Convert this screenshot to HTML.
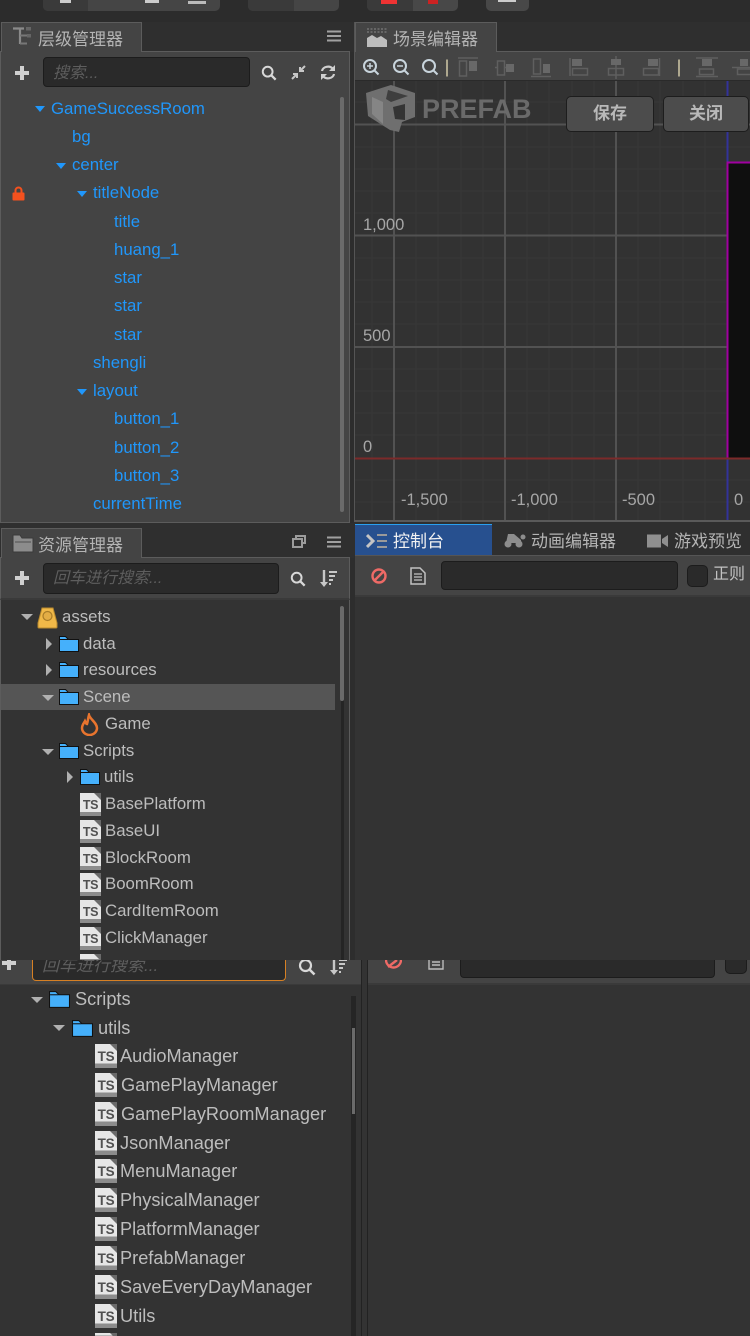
<!DOCTYPE html>
<html lang="zh">
<head>
<meta charset="utf-8">
<title>Cocos Creator</title>
<style>
html,body{margin:0;padding:0;background:#2d2d2d;width:750px;height:1336px;overflow:hidden}
body{position:relative;font-family:"Liberation Sans","Noto Sans CJK SC",sans-serif}
div,span,svg{position:absolute}
#r{left:0;top:0;width:750px;height:1336px;overflow:hidden;filter:blur(.35px)}
.t{white-space:nowrap;line-height:20px;height:20px}
.h{font-size:16.8px;color:#2097fb;margin-top:1px}
.a{font-size:16.8px;color:#bdbdbd;margin-top:1px}
.b{font-size:18.2px;color:#bdbdbd;margin-top:1px}
.tab{font-size:17px;color:#b4b4b4;font-weight:400;white-space:nowrap;line-height:24px}
.ph{font-style:italic;color:#5e5e5e;white-space:nowrap;font-size:16px;line-height:24px}
.ar{width:0;height:0;border-left:5.5px solid transparent;border-right:5.5px solid transparent;border-top:6px solid #2097fb}
.ag{width:0;height:0;border-left:6px solid transparent;border-right:6px solid transparent;border-top:6px solid #b0b0b0}
.ad{width:0;height:0;border-top:6px solid transparent;border-bottom:6px solid transparent;border-left:6px solid #b0b0b0}
.ts,.ts2{width:21px;height:23px;background:linear-gradient(#e6e6e6 0,#e6e6e6 82%,#8c8c8c 82%,#8c8c8c 100%);font:700 12.5px/25px "Liberation Sans",sans-serif;color:#505050;text-align:center;letter-spacing:-.3px;overflow:hidden}
.ts2{width:22px;height:24px;font-size:13.5px;line-height:26px}
.ts::after,.ts2::after{content:"";position:absolute;right:0;top:0;width:0;height:0;border-top:7px solid #6a6a6a;border-left:7px solid transparent}
.inp{background:#2a2a2a;border:1px solid #1c1c1c;border-radius:4px;box-sizing:border-box}
.btn{background:#4c4c4c;border:1px solid #1d1d1d;border-radius:5px;box-sizing:border-box;color:#b9b9b9;font-size:17px;font-weight:700;text-align:center;line-height:33px}
.lab{font-size:16.5px;color:#a6a6a6;white-space:nowrap;line-height:20px}
</style>
</head>
<body>
<svg width="0" height="0" style="position:absolute">
<defs>
<symbol id="folder" viewBox="0 0 20 16">
<path d="M.5 15.500V.5h6l3 3h10v12z" fill="#45b0fb" stroke="#111" stroke-width="1"/>
<path d="M1 3.500h8" stroke="#111" stroke-width="1"/>
</symbol>
<symbol id="mag" viewBox="0 0 18 18">
<circle cx="7.500" cy="7.500" r="5.500" fill="none" stroke="#d8d8d8" stroke-width="2.200"/>
<path d="M11.500 11.500l5 5" stroke="#d8d8d8" stroke-width="2.600"/>
</symbol>
<symbol id="plus" viewBox="0 0 14 14">
<path d="M7 0v14M0 7h14" stroke="#d0d0d0" stroke-width="4"/>
</symbol>
<symbol id="menu" viewBox="0 0 14 12">
<path d="M0 1.500h14M0 6h14M0 10.500h14" stroke="#a0a0a0" stroke-width="2"/>
</symbol>
</defs>
</svg>
<div id="r">

<!-- top strip -->
<div style="left:0;top:0;width:750px;height:22px;background:#2c2c2c"></div>
<div style="left:43px;top:0;width:177px;height:11px;background:#454545;border-radius:0 0 5px 5px"></div>
<div style="left:43px;top:0;width:45px;height:11px;background:#3a3a3a;border-radius:0 0 0 5px"></div>
<div style="left:248px;top:0;width:91px;height:11px;background:#454545;border-radius:0 0 5px 5px"></div>
<div style="left:248px;top:0;width:46px;height:11px;background:#3a3a3a;border-radius:0 0 0 5px"></div>
<div style="left:367px;top:0;width:91px;height:11px;background:#484848;border-radius:0 0 5px 5px"></div>
<div style="left:367px;top:0;width:46px;height:11px;background:#3a3a3a;border-radius:0 0 0 5px"></div>
<div style="left:486px;top:0;width:43px;height:11px;background:#484848;border-radius:0 0 5px 5px"></div>
<div style="left:381px;top:0;width:16px;height:4px;background:#e33"></div>
<div style="left:428px;top:0;width:10px;height:4px;background:#c22"></div>
<div style="left:60px;top:0;width:11px;height:3px;background:#ccc"></div>
<div style="left:145px;top:0;width:14px;height:3px;background:#ccc"></div>
<div style="left:188px;top:1px;width:18px;height:3px;background:#bbb"></div>
<div style="left:498px;top:0;width:18px;height:2px;background:#ccc"></div>

<!-- hierarchy panel -->
<div style="left:0;top:22px;width:354px;height:30px;background:#2f2f2f"></div>
<div style="left:0;top:51px;width:350px;height:472px;background:#444;box-sizing:border-box;border:1px solid #5c5c5c"></div>
<div style="left:1px;top:22px;width:141px;height:30px;background:#444;border:1px solid #5c5c5c;border-bottom:0;box-sizing:border-box"></div>
<svg style="left:12px;top:26px" width="20" height="22" viewBox="0 0 20 22"><path d="M1 2.500h11M8 3v15" stroke="#8a8a8a" stroke-width="2.200" fill="none"/><path d="M8 9.500h8M8 17.500h8" stroke="#777" stroke-width="2" fill="none"/><rect x="14" y="1" width="5" height="3.500" fill="#666"/><rect x="15" y="8" width="4" height="3.500" fill="#666"/><rect x="15" y="16" width="4" height="3.500" fill="#444"/></svg>
<div class="tab" style="left:38px;top:28px">层级管理器</div>
<svg style="left:327px;top:30px" width="14" height="12"><use href="#menu"/></svg>
<svg style="left:15px;top:66px" width="14" height="14"><use href="#plus"/></svg>
<div class="inp" style="left:43px;top:57px;width:207px;height:30px"></div>
<div class="ph" style="left:53px;top:62px">搜索...</div>
<svg style="left:261px;top:65px" width="16" height="16"><use href="#mag"/></svg>
<svg style="left:291px;top:65px" width="15" height="15" viewBox="0 0 15 15"><path d="M14 1L9 6M9 2v4h4M1 14l5-5M2 9h4v4" stroke="#c8c8c8" stroke-width="2" fill="none"/></svg>
<svg style="left:320px;top:65px" width="16" height="15" viewBox="0 0 16 15"><path d="M2 6a6 5 0 0 1 11-2M14 9a6 5 0 0 1-11 2" stroke="#cfcfcf" stroke-width="2.200" fill="none"/><path d="M15 0v6h-6zM1 15V9h6z" fill="#cfcfcf"/></svg>
<div style="left:340px;top:97px;width:4px;height:415px;background:#6a6a6a;border-radius:2px"></div>

<div class="ar" style="left:35px;top:106px"></div><div class="t h" style="left:51px;top:98px">GameSuccessRoom</div>
<div class="t h" style="left:72px;top:126px">bg</div>
<div class="ar" style="left:56px;top:163px"></div><div class="t h" style="left:72px;top:154px">center</div>
<svg style="left:12px;top:186px" width="13" height="15" viewBox="0 0 13 15"><path d="M3.500 7V4.500a3 3 0 0 1 6 0V7" fill="none" stroke="#f4511e" stroke-width="2"/><rect x="0.500" y="6.500" width="12" height="8" rx="1" fill="#f4511e"/></svg>
<div class="ar" style="left:77px;top:191px"></div><div class="t h" style="left:93px;top:182px">titleNode</div>
<div class="t h" style="left:114px;top:211px">title</div>
<div class="t h" style="left:114px;top:239px">huang_1</div>
<div class="t h" style="left:114px;top:267px">star</div>
<div class="t h" style="left:114px;top:295px">star</div>
<div class="t h" style="left:114px;top:324px">star</div>
<div class="t h" style="left:93px;top:352px">shengli</div>
<div class="ar" style="left:77px;top:389px"></div><div class="t h" style="left:93px;top:380px">layout</div>
<div class="t h" style="left:114px;top:408px">button_1</div>
<div class="t h" style="left:114px;top:437px">button_2</div>
<div class="t h" style="left:114px;top:465px">button_3</div>
<div class="t h" style="left:93px;top:493px">currentTime</div>

<!-- assets panel -->
<div style="left:0;top:523px;width:354px;height:35px;background:#2f2f2f"></div>
<div style="left:0;top:557px;width:350px;height:43px;background:#444;box-sizing:border-box;border:1px solid #5c5c5c;border-bottom:2px solid #3a3a3a"></div>
<div style="left:1px;top:528px;width:141px;height:30px;background:#444;border:1px solid #5c5c5c;border-bottom:0;box-sizing:border-box"></div>
<svg style="left:12px;top:534px" width="22" height="20" viewBox="0 0 22 20"><path d="M1 18V1h7l2 3h11v14z" fill="#8c8c8c" stroke="#3a3a3a"/><path d="M3 8h16" stroke="#6e6e6e" stroke-width="2"/></svg>
<div class="tab" style="left:38px;top:534px">资源管理器</div>
<svg style="left:292px;top:535px" width="14" height="13" viewBox="0 0 14 13"><path d="M4 3V1h9v7h-3M1 4h9v8H1z" fill="none" stroke="#9c9c9c" stroke-width="2"/></svg>
<svg style="left:327px;top:536px" width="14" height="12"><use href="#menu"/></svg>
<svg style="left:15px;top:571px" width="14" height="14"><use href="#plus"/></svg>
<div class="inp" style="left:43px;top:563px;width:236px;height:31px"></div>
<div class="ph" style="left:53px;top:567px">回车进行搜索...</div>
<svg style="left:290px;top:571px" width="16" height="16"><use href="#mag"/></svg>
<svg style="left:320px;top:570px" width="18" height="18" viewBox="0 0 18 18"><path d="M4 0v14" stroke="#c8c8c8" stroke-width="2.400"/><path d="M0 12h8l-4 5z" fill="#c8c8c8"/><path d="M9 2h8M9 6h6M9 10h4M9 14h2" stroke="#c8c8c8" stroke-width="2"/></svg>

<div style="left:0;top:600px;width:350px;height:360px;background:#333;box-sizing:border-box;border-left:1px solid #5c5c5c;border-right:1px solid #5c5c5c"></div>
<div style="left:1px;top:684px;width:334px;height:26px;background:#555"></div>
<div style="left:341px;top:606px;width:3px;height:354px;background:#252525"></div>
<div style="left:340px;top:606px;width:4px;height:95px;background:#6a6a6a;border-radius:2px"></div>

<div class="ag" style="left:21px;top:614px"></div>
<svg style="left:37px;top:606px" width="21" height="23" viewBox="0 0 21 23"><path d="M5 2h11l4 15v4a1 1 0 0 1-1 1H2a1 1 0 0 1-1-1v-4z" fill="#f0b848" stroke="#b98a2e"/><circle cx="10.500" cy="10" r="4.500" fill="#e3ad45" stroke="#a87c28" stroke-width="1.200"/></svg>
<div class="t a" style="left:62px;top:606px">assets</div>

<div class="ad" style="left:46px;top:638px"></div>
<svg style="left:59px;top:636px" width="20" height="16"><use href="#folder"/></svg>
<div class="t a" style="left:83px;top:633px">data</div>

<div class="ad" style="left:46px;top:664px"></div>
<svg style="left:59px;top:662px" width="20" height="16"><use href="#folder"/></svg>
<div class="t a" style="left:83px;top:659px">resources</div>

<div class="ag" style="left:42px;top:695px"></div>
<svg style="left:59px;top:689px" width="20" height="16"><use href="#folder"/></svg>
<div class="t a" style="left:83px;top:686px">Scene</div>

<svg style="left:80px;top:713px" width="19" height="23" viewBox="0 0 19 23"><path d="M9 2c1 4 8 8 8 13a7.500 7 0 0 1-15 0c0-3 2-5 3-7 1 2 1 3 2 3 1-3 1-6 2-9z" fill="none" stroke="#e8742e" stroke-width="2.500"/></svg>
<div class="t a" style="left:105px;top:713px">Game</div>

<div class="ag" style="left:42px;top:749px"></div>
<svg style="left:59px;top:743px" width="20" height="16"><use href="#folder"/></svg>
<div class="t a" style="left:83px;top:740px">Scripts</div>

<div class="ad" style="left:67px;top:771px"></div>
<svg style="left:80px;top:769px" width="20" height="16"><use href="#folder"/></svg>
<div class="t a" style="left:104px;top:766px">utils</div>

<div class="ts" style="left:80px;top:793px">TS</div><div class="t a" style="left:105px;top:793px">BasePlatform</div>
<div class="ts" style="left:80px;top:820px">TS</div><div class="t a" style="left:105px;top:820px">BaseUI</div>
<div class="ts" style="left:80px;top:847px">TS</div><div class="t a" style="left:105px;top:847px">BlockRoom</div>
<div class="ts" style="left:80px;top:873px">TS</div><div class="t a" style="left:105px;top:873px">BoomRoom</div>
<div class="ts" style="left:80px;top:900px">TS</div><div class="t a" style="left:105px;top:900px">CardItemRoom</div>
<div class="ts" style="left:80px;top:927px">TS</div><div class="t a" style="left:105px;top:927px">ClickManager</div>
<div class="ts" style="left:80px;top:954px;height:6px"></div>

<!-- scene panel -->
<div style="left:354px;top:22px;width:396px;height:30px;background:#2f2f2f"></div>
<div style="left:355px;top:51px;width:395px;height:30px;background:#444;border-top:1px solid #5c5c5c;border-bottom:1px solid #2a2a2a;box-sizing:border-box"></div>
<div style="left:355px;top:22px;width:142px;height:30px;background:#444;border:1px solid #5c5c5c;border-bottom:0;box-sizing:border-box"></div>
<svg style="left:366px;top:27px" width="22" height="22" viewBox="0 0 22 22"><path d="M1 20V11l5-3 5 3 4-2 6 4v7z" fill="#bdbdbd"/><path d="M1 2h20M1 5h20" stroke="#666" stroke-width="2" stroke-dasharray="2 1.500"/></svg>
<div class="tab" style="left:393px;top:28px">场景编辑器</div>

<svg style="left:355px;top:56px;width:395px;height:24px" width="395" height="24" viewBox="0 0 395 24" fill="none">
<g stroke="#c8d4dc" stroke-width="2"><circle cx="15" cy="10" r="6"/><path d="M19.500 14.500l4 4"/><path d="M12 10h6M15 7v6" stroke-width="1.500"/><circle cx="45" cy="10" r="6"/><path d="M49.500 14.500l4 4"/><path d="M42 10h6" stroke-width="1.500"/><circle cx="74" cy="10" r="6"/><path d="M78.500 14.500l4 4"/></g>
<path d="M92 3.500v17M324 3.500v17" stroke="#d2c9a8" stroke-width="1.500"/>
<g stroke="#5f5f5f" stroke-width="1.500">
<path d="M103 2h20"/><rect x="104.500" y="5" width="7" height="15"/>
<path d="M140 11.500h2M150 11.500h1"/><rect x="142.500" y="5" width="7" height="14"/>
<path d="M176 20.500h20"/><rect x="178.500" y="3" width="7" height="15"/>
<path d="M215 2v18"/><rect x="217.500" y="12.500" width="15" height="6.500"/>
<path d="M261 0v23"/><rect x="253.500" y="12.500" width="15" height="6.500"/>
<path d="M304.500 2v18"/><rect x="288.500" y="12.500" width="15" height="6.500"/>
<path d="M341 2h22M341 20.500h22"/><rect x="344.500" y="13" width="14" height="5.500"/>
<path d="M377 11.500h18"/><rect x="382.500" y="13" width="14" height="5.500"/>
</g>
<g fill="#686868"><rect x="114" y="5" width="8" height="10"/><rect x="151" y="8" width="8" height="8"/><rect x="188" y="8" width="7" height="9"/><rect x="217" y="3" width="10" height="7"/><rect x="256" y="3" width="10" height="6"/><rect x="293" y="3" width="10" height="7"/><rect x="347" y="3" width="10" height="7"/><rect x="385" y="3" width="8" height="7"/></g>
</svg>

<svg style="left:355px;top:81px" width="395" height="441" viewBox="0 0 395 441">
<rect width="395" height="441" fill="#323232"/>
<g stroke="#383838" stroke-width="1">
<path d="M17 0v441M61 0v441M83 0v441M106 0v441M128 0v441M172 0v441M194 0v441M217 0v441M239 0v441M283 0v441M305 0v441M328 0v441M350 0v441"/>
<path d="M0 21h395M0 66h395M0 88h395M0 110h395M0 132h395M0 177h395M0 199h395M0 221h395M0 243h395M0 288h395M0 310h395M0 332h395M0 354h395M0 399h395M0 421h395"/>
</g>
<g stroke="#525252" stroke-width="2">
<path d="M39 0v441M150 0v441M261 0v441"/>
<path d="M0 43.500h395M0 154.500h395M0 266h395"/>
</g>
<path d="M372.500 0v81" stroke="#33339a" stroke-width="2"/>
<path d="M372.500 377v64" stroke="#33339a" stroke-width="2"/>
<rect x="373" y="81" width="22" height="296" fill="#0f0f0f"/>
<path d="M395 81.500h-22.500V377" fill="none" stroke="#a000a0" stroke-width="2"/>
<path d="M0 377.500h395" stroke="#7c2a2a" stroke-width="2"/>
<g transform="translate(5,1)">
<path d="M6 11L31 3l24 8v24l-13 5-3 10-9-2L8 34z" fill="#6f6f6f"/>
<path d="M28 8l20 6-17 6-5-3z" fill="#3e3e3e"/>
<path d="M12 15l11 5v22l-11-10z" fill="#858585"/>
<path d="M33 25l12-3v16l-10-1z" fill="#343434"/>
</g>
</svg>
<div style="left:422px;top:94px;font:700 27px/30px 'Liberation Sans',sans-serif;color:#6a6a6a;white-space:nowrap">PREFAB</div>
<div class="lab" style="left:363px;top:215px">1,000</div>
<div class="lab" style="left:363px;top:326px">500</div>
<div class="lab" style="left:363px;top:437px">0</div>
<div class="lab" style="left:401px;top:490px">-1,500</div>
<div class="lab" style="left:511px;top:490px">-1,000</div>
<div class="lab" style="left:622px;top:490px">-500</div>
<div class="lab" style="left:734px;top:490px">0</div>
<div class="btn" style="left:566px;top:96px;width:88px;height:36px">保存</div>
<div class="btn" style="left:663px;top:96px;width:86px;height:36px">关闭</div>
<div style="left:354px;top:22px;width:1px;height:500px;background:#555"></div>

<!-- console tabs -->
<div style="left:354px;top:520px;width:396px;height:2px;background:#5a5a5a"></div>
<div style="left:354px;top:522px;width:396px;height:34px;background:#2f2f2f"></div>
<div style="left:355px;top:524px;width:137px;height:31px;background:#27508f;border-top:1px solid #2aa0f0;box-sizing:border-box"></div>
<div style="left:355px;top:555px;width:395px;height:42px;background:#444;border-top:1px solid #555;border-bottom:2px solid #3a3a3a;box-sizing:border-box"></div>
<div style="left:355px;top:597px;width:395px;height:363px;background:#333"></div>
<svg style="left:366px;top:533px" width="22" height="17" viewBox="0 0 22 17"><path d="M1 2l6 6-6 6" fill="none" stroke="#c4c4c4" stroke-width="3"/><path d="M11 2h10M11 8h10M11 14h10" stroke="#9a9a9a" stroke-width="2"/></svg>
<div class="tab" style="left:393px;top:530px;color:#f2f2f2">控制台</div>
<svg style="left:503px;top:531px" width="23" height="18" viewBox="0 0 23 18"><circle cx="5" cy="13" r="3.500" fill="#8d8d8d"/><circle cx="16" cy="13" r="3.500" fill="#8d8d8d"/><circle cx="20" cy="6" r="2.500" fill="#8d8d8d"/><path d="M5 3h6l7 6v3H3z" fill="#8d8d8d"/></svg>
<div class="tab" style="left:531px;top:530px">动画编辑器</div>
<svg style="left:647px;top:534px" width="21" height="14" viewBox="0 0 21 14"><rect width="14" height="13" y="0.500" fill="#8f8f8f"/><path d="M15 5l6-4v12l-6-4z" fill="#8f8f8f"/></svg>
<div class="tab" style="left:674px;top:530px">游戏预览</div>
<svg style="left:371px;top:568px" width="16" height="16" viewBox="0 0 16 16"><circle cx="8" cy="8" r="6.500" fill="none" stroke="#ee6a66" stroke-width="2.400"/><path d="M3.500 12.500l9-9" stroke="#ee6a66" stroke-width="2.400"/></svg>
<svg style="left:410px;top:567px" width="16" height="18" viewBox="0 0 16 18"><path d="M1 1h9l5 5v11H1z" fill="#3c3c3c" stroke="#c2c2c2" stroke-width="1.500"/><path d="M4 7h8M4 10h8M4 13h8" stroke="#c2c2c2" stroke-width="1.300"/></svg>
<div class="inp" style="left:441px;top:561px;width:237px;height:29px"></div>
<div class="inp" style="left:687px;top:565px;width:21px;height:22px;border-radius:5px"></div>
<div style="left:713px;top:565px;font-size:16px;line-height:20px;color:#c2c2c2;white-space:nowrap">正则</div>

<!-- lower screenshot -->
<div style="left:0;top:960px;width:750px;height:376px;background:#333"></div>
<div style="left:0;top:960px;width:362px;height:25px;background:#444;border-bottom:1px solid #3a3a3a;box-sizing:border-box"></div>
<div style="left:368px;top:960px;width:382px;height:25px;background:#444;border-bottom:2px solid #3a3a3a;box-sizing:border-box"></div>
<div style="left:361px;top:960px;width:1px;height:376px;background:#222"></div>
<div style="left:367px;top:960px;width:1px;height:376px;background:#222"></div>
<div style="left:2px;top:960px;width:14px;height:11px;overflow:hidden"><svg style="left:0;top:-4px" width="14" height="14"><use href="#plus"/></svg></div>
<div style="left:32px;top:960px;width:254px;height:21px;background:#2a2a2a;border:1px solid #d68024;border-top:0;border-radius:0 0 4px 4px;box-sizing:border-box;overflow:hidden"></div>
<div style="left:42px;top:960px;width:200px;height:20px;overflow:hidden"><div class="ph" style="left:0;top:-6px;font-size:17px">回车进行搜索...</div></div>
<div style="left:298px;top:960px;width:18px;height:16px;overflow:hidden"><svg style="left:0;top:-2px" width="18" height="18"><use href="#mag"/></svg></div>
<div style="left:330px;top:960px;width:18px;height:16px;overflow:hidden"><svg style="left:0;top:-2px" width="18" height="18" viewBox="0 0 18 18"><path d="M4 0v14" stroke="#c8c8c8" stroke-width="2.400"/><path d="M0 12h8l-4 5z" fill="#c8c8c8"/><path d="M9 2h8M9 6h6M9 10h4M9 14h2" stroke="#c8c8c8" stroke-width="2"/></svg></div>
<svg style="left:385px;top:960px" width="17" height="10" viewBox="0 0 17 10"><path d="M1 0a7.500 7.500 0 0 0 15 0M3 7l9-7" fill="none" stroke="#ee6a66" stroke-width="2.400"/></svg>
<svg style="left:428px;top:960px" width="16" height="10" viewBox="0 0 16 10"><path d="M1 0v9h14V0M4 2h8M4 5h8" fill="none" stroke="#bdbdbd" stroke-width="1.400"/></svg>
<div style="left:460px;top:960px;width:255px;height:18px;background:#2a2a2a;border:1px solid #1c1c1c;border-top:0;border-radius:0 0 4px 4px;box-sizing:border-box"></div>
<div style="left:725px;top:960px;width:22px;height:14px;background:#2a2a2a;border:1px solid #1c1c1c;border-top:0;border-radius:0 0 5px 5px;box-sizing:border-box"></div>
<div style="left:351px;top:996px;width:5px;height:340px;background:#252525"></div>
<div style="left:352px;top:1028px;width:3px;height:86px;background:#6a6a6a"></div>

<div class="ag" style="left:31px;top:997px"></div>
<svg style="left:49px;top:991px" width="21" height="17"><use href="#folder"/></svg>
<div class="t b" style="left:75px;top:988px">Scripts</div>
<div class="ag" style="left:53px;top:1025px"></div>
<svg style="left:72px;top:1020px" width="21" height="17"><use href="#folder"/></svg>
<div class="t b" style="left:98px;top:1017px">utils</div>

<div class="ts2" style="left:95px;top:1044px">TS</div><div class="t b" style="left:120px;top:1045px">AudioManager</div>
<div class="ts2" style="left:95px;top:1073px">TS</div><div class="t b" style="left:121px;top:1074px">GamePlayManager</div>
<div class="ts2" style="left:95px;top:1102px">TS</div><div class="t b" style="left:121px;top:1103px">GamePlayRoomManager</div>
<div class="ts2" style="left:95px;top:1131px">TS</div><div class="t b" style="left:120px;top:1132px">JsonManager</div>
<div class="ts2" style="left:95px;top:1159px">TS</div><div class="t b" style="left:120px;top:1160px">MenuManager</div>
<div class="ts2" style="left:95px;top:1188px">TS</div><div class="t b" style="left:120px;top:1189px">PhysicalManager</div>
<div class="ts2" style="left:95px;top:1217px">TS</div><div class="t b" style="left:120px;top:1218px">PlatformManager</div>
<div class="ts2" style="left:95px;top:1246px">TS</div><div class="t b" style="left:120px;top:1247px">PrefabManager</div>
<div class="ts2" style="left:95px;top:1275px">TS</div><div class="t b" style="left:120px;top:1276px">SaveEveryDayManager</div>
<div class="ts2" style="left:95px;top:1304px">TS</div><div class="t b" style="left:120px;top:1305px">Utils</div>
<div class="ts2" style="left:95px;top:1333px;height:3px"></div>
</div>
</body>
</html>
